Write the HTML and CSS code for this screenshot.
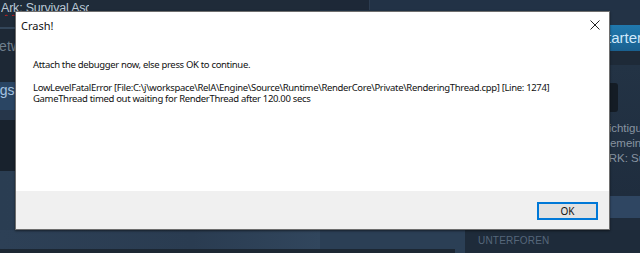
FILE: index.html
```html
<!DOCTYPE html>
<html>
<head>
<meta charset="utf-8">
<link rel="stylesheet" href="styles.css">
</head>
<body>
<div class="page">
  <div class="col left">
    <div class="l-top"><span class="game"><span class="squiggle">Ark</span>: Survival Ascended</span></div>
    <div class="l-line"></div>
    <div class="l-net"><span>Network</span></div>
    <div class="l-sel"><span>Einstellungshilfe</span></div>
    <div class="l-mid"></div>
    <div class="l-dark"></div>
    <div class="l-blue"></div>
    <div class="l-bottom"></div>
    <div class="l-strip"></div>
  </div>
  <div class="col right">
    <div class="r-top"><div class="r-top-a"></div><div class="r-top-b"></div></div>
    <div class="r-top2"></div>
    <div class="r-btnrow"><div class="play">Starten</div></div>
    <div class="r-gap"></div>
    <div class="r-panel">
      <div class="r-box"></div>
      <ul class="r-list">
        <li>Sichtigungen</li>
        <li>Gemeinschaft</li>
        <li>ARK: Survival</li>
      </ul>
    </div>
    <div class="r-band"></div>
    <div class="r-low"></div>
    <div class="r-bottom">
      <div class="rb-left"><div class="rb-strip"></div></div>
      <div class="rb-right">UNTERFOREN</div>
    </div>
  </div>
</div>

<div class="dialog">
  <div class="titlebar">
    <span class="title">Crash!</span>
    <svg class="close" width="10" height="10" viewBox="0 0 10 10"><path d="M0.5 0.5 L9.5 9.5 M9.5 0.5 L0.5 9.5" stroke="#222" stroke-width="1" fill="none"/></svg>
  </div>
  <div class="content">
    <p class="msg">Attach the debugger now, else press OK to continue.</p>
    <p class="err">LowLevelFatalError [File:C:\j\workspace\RelA\Engine\Source\Runtime\RenderCore\Private\RenderingThread.cpp] [Line: 1274]<br>GameThread timed out waiting for RenderThread after 120.00 secs</p>
  </div>
  <div class="footer">
    <button class="ok">OK</button>
  </div>
</div>
</body>
</html>
```

FILE: styles.css
```css
* { box-sizing: border-box; }
html, body { margin: 0; padding: 0; }
body {
  width: 640px;
  height: 253px;
  overflow: hidden;
  background: #1b2838;
  font-family: "Noto Sans", "DejaVu Sans", sans-serif;
  position: relative;
}
.page {
  display: flex;
  width: 640px;
  height: 253px;
}
.col {
  width: 320px;
  display: flex;
  flex-direction: column;
}

/* left column */
.l-top {
  height: 27px;
  background: #1f2b39;
  padding-left: 1px;
  padding-top: 1px;
}
.game {
  display: block;
  width: 88px;
  overflow: hidden;
  white-space: nowrap;
  font-family: "Liberation Sans", sans-serif;
  font-size: 12.5px;
  line-height: 15px;
  color: #b9c7d4;
  letter-spacing: -0.2px;
}
.squiggle {
  text-decoration: underline wavy #d02020;
  text-decoration-thickness: 1px;
  text-underline-offset: 2px;
}
.l-line { height: 2px; background: #33465a; }
.l-net {
  height: 53px;
  background: #1d2835;
  color: #6f7e8c;
  font-family: "Liberation Sans", sans-serif;
  font-size: 14px;
  padding-top: 9px;
  white-space: nowrap;
  overflow: hidden;
}
.l-net span { margin-left: -11px; }
.l-sel {
  height: 28px;
  background: #2a4563;
  color: #a7c6e3;
  font-family: "Liberation Sans", sans-serif;
  font-size: 14px;
  line-height: 16px;
  white-space: nowrap;
  overflow: hidden;
}
.l-sel span { margin-left: -61px; }
.l-mid { height: 10px; background: #26364a; }
.l-dark { height: 51px; background: #18222d; }
.l-blue { height: 59px; background: linear-gradient(90deg, #2a3d52, #2c4056); }
.l-bottom { height: 19px; background: linear-gradient(90deg, #2d4056, #2a3c51 60%, #31465d); }
.l-strip { flex: 1; background: #1c2733; }

/* right column */
.r-top { height: 10px; display: flex; }
.r-top-a { width: 50px; background: #1d2837; border-right: 1px solid #2c3c50; }
.r-top-b { flex: 1; background: #223246; }
.r-top2 { height: 15px; background: #233346; }
.r-btnrow {
  height: 26px;
  background: #233346;
  display: flex;
  overflow: hidden;
}
.play {
  flex: none;
  margin-left: 265px;
  width: 120px;
  background: linear-gradient(180deg, #2079ae, #1a608f);
  color: #cfe9fb;
  font-family: "Liberation Sans", sans-serif;
  font-size: 15px;
  line-height: 26px;
  padding-left: 12px;
}
.r-gap { height: 14px; background: #1e2a38; }
.r-panel {
  height: 131px;
  background: linear-gradient(180deg, #233345, #1f2d3e);
  padding-top: 18px;
}
.r-box {
  width: 298px;
  height: 29px;
  background: #141c25;
  border-radius: 0 3px 3px 0;
}
.r-list {
  list-style: none;
  margin: 9px 0 0 0;
  padding: 0 0 0 281px;
  font-family: "Liberation Sans", sans-serif;
  font-size: 11.5px;
  line-height: 15px;
  color: #8793a0;
  white-space: nowrap;
  overflow: hidden;
}
.r-band { height: 22px; background: #2f4662; }
.r-low { height: 12px; background: #1f2c3c; }
.r-bottom {
  flex: 1;
  display: flex;
}
.rb-left {
  width: 145px;
  display: flex;
  flex-direction: column;
  justify-content: flex-end;
  background: #2b3f55;
}
.rb-strip { height: 4px; background: #1c2733; margin-right: 10px; }
.rb-right {
  flex: 1;
  background: #1e2b3a;
  color: #56677a;
  font-family: "Liberation Sans", sans-serif;
  font-size: 10px;
  letter-spacing: 0.2px;
  padding-left: 13px;
  padding-top: 5px;
}

/* dialog */
.dialog {
  position: absolute;
  left: 15px;
  top: 11px;
  width: 595px;
  height: 219px;
  border: 1px solid #6e6e6e;
  background: #fff;
  display: flex;
  flex-direction: column;
  box-shadow: 0 1px 2px rgba(0,0,0,0.5);
}
.titlebar {
  height: 26px;
  display: flex;
  align-items: center;
  justify-content: space-between;
  padding: 0 9px 0 5px;
}
.title {
  font-size: 11px;
  color: #111;
}
.content {
  flex: 1;
  padding: 21px 0 0 17px;
  font-size: 9.5px;
  letter-spacing: -0.33px;
  color: #111;
  white-space: nowrap;
}
.content p { margin: 0; }
.msg { line-height: 12px; }
.err { line-height: 11px; margin-top: 11px !important; }
.footer {
  height: 38px;
  background: #f0f0f0;
  display: flex;
  justify-content: flex-end;
  align-items: center;
  padding: 2px 11px 0 0;
}
.ok {
  width: 61px;
  height: 18px;
  border: 2px solid #0078d7;
  background: #e1e1e1;
  font-family: "Noto Sans", sans-serif;
  font-size: 10px;
  color: #111;
  padding: 0;
  line-height: 14px;
}
```
